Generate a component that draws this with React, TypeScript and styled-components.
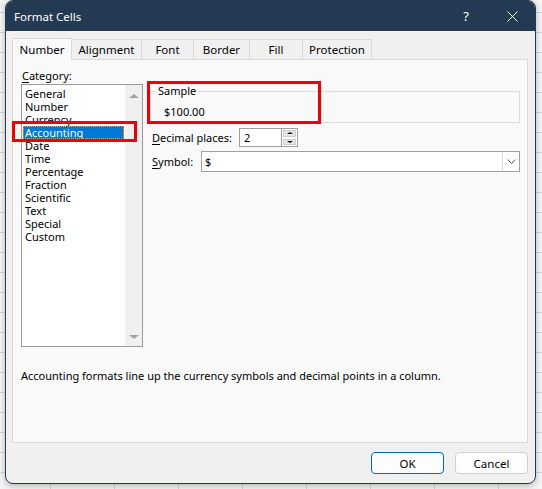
import React from 'react';
import styled, { createGlobalStyle } from 'styled-components';

const GlobalStyle = createGlobalStyle`
  html, body {
    margin: 0;
    padding: 0;
  }

  body {
    width: 542px;
    height: 489px;
    overflow: hidden;
    font-family: "Noto Sans", "Liberation Sans", sans-serif;
    font-size: 11px;
    color: #000;
    background-color: #f4f4f4;
    background-image:
      linear-gradient(#d4d4d4 1px, transparent 1px),
      linear-gradient(90deg, #d4d4d4 1px, transparent 1px);
    background-size: 64px 20px;
    background-position: 50px 12px;
  }
`;

const Dialog = styled.div`
  box-sizing: border-box;
  margin-left: 5px;
  width: 531px;
  height: 484px;
  border: 1px solid #233a52;
  border-radius: 8px;
  overflow: hidden;
  background: #f0f0f0;
  display: flex;
  flex-direction: column;
  box-shadow: 0 2px 6px rgba(0, 0, 0, 0.25);
`;

const TitleBar = styled.div`
  height: 30px;
  flex-shrink: 0;
  background: #233a52;
  color: #fff;
  display: flex;
  align-items: center;
  padding-left: 8px;
  font-size: 11.5px;
`;

const Title = styled.div`
  flex: 1;
`;

const TitleButton = styled.div`
  width: 46px;
  height: 30px;
  display: flex;
  align-items: center;
  justify-content: center;
  color: #fff;
  font-size: 13px;
`;

const Body = styled.div`
  flex: 1;
  display: flex;
  flex-direction: column;
  padding: 8px 7px 0 6px;
`;

const TabStrip = styled.div`
  display: flex;
  padding-left: 1px;
  height: 21px;
  position: relative;
  z-index: 1;
`;

const Tab = styled.div<{ $w: number; $active?: boolean }>`
  box-sizing: border-box;
  width: ${(p) => p.$w}px;
  height: ${(p) => (p.$active ? 22 : 21)}px;
  margin-top: ${(p) => (p.$active ? -1 : 0)}px;
  margin-left: -1px;
  display: flex;
  align-items: center;
  justify-content: center;
  border: 1px solid #d9d9d9;
  border-bottom: ${(p) => (p.$active ? 'none' : '1px solid #d9d9d9')};
  background: ${(p) => (p.$active ? '#f9f9f9' : '#f0f0f0')};
  font-size: 11.5px;
  padding-bottom: 1px;
`;

const Panel = styled.div`
  box-sizing: border-box;
  height: 384px;
  margin-top: -1px;
  border: 1px solid #d9d9d9;
  background: #f9f9f9;
  padding: 8px 7px 0 8px;
  display: flex;
  flex-direction: column;
`;

const Columns = styled.div`
  display: grid;
  grid-template-columns: 122px 1fr;
  column-gap: 7px;
`;

const LeftColumn = styled.div`
  display: flex;
  flex-direction: column;
`;

const FieldLabel = styled.div<{ $w?: number }>`
  line-height: 16px;
  padding-left: 1px;
  white-space: nowrap;
  width: ${(p) => (p.$w ? `${p.$w}px` : 'auto')};
  flex-shrink: 0;
`;

const Key = styled.span`
  text-decoration: underline;
  text-underline-offset: 2px;
`;

const ListWrap = styled.div`
  position: relative;
`;

const ListBox = styled.div`
  box-sizing: border-box;
  height: 263px;
  border: 1px solid #9a9a9a;
  background: #fff;
  display: flex;
`;

const ListItems = styled.div`
  flex: 1;
  padding: 2px 1px 0 1px;
`;

const ListItem = styled.div<{ $selected?: boolean }>`
  box-sizing: border-box;
  height: 13px;
  line-height: 13px;
  padding-left: 2px;
  white-space: nowrap;
  background: ${(p) => (p.$selected ? '#0078d7' : 'transparent')};
  color: ${(p) => (p.$selected ? '#fff' : '#000')};
  outline: ${(p) => (p.$selected ? '1px dotted #f3a43a' : 'none')};
  outline-offset: -1px;
`;

const ScrollBar = styled.div`
  width: 17px;
  background: #f0f0f0;
  display: flex;
  flex-direction: column;
  justify-content: space-between;
  align-items: center;
  padding: 9px 0 7px;
`;

const Arrow = styled.div<{ $down?: boolean; $color?: string; $size?: number }>`
  width: 0;
  height: 0;
  border-left: ${(p) => p.$size ?? 5}px solid transparent;
  border-right: ${(p) => p.$size ?? 5}px solid transparent;
  ${(p) =>
    p.$down
      ? `border-top: ${(p.$size ?? 5) - 1}px solid ${p.$color ?? '#a3a3a3'};`
      : `border-bottom: ${(p.$size ?? 5) - 1}px solid ${p.$color ?? '#a3a3a3'};`}
`;

const Highlight = styled.div<{ $left: number; $top: number; $w: number; $h: number }>`
  position: absolute;
  left: ${(p) => p.$left}px;
  top: ${(p) => p.$top}px;
  width: ${(p) => p.$w}px;
  height: ${(p) => p.$h}px;
  box-sizing: border-box;
  border: 3px solid #f00000;
  pointer-events: none;
`;

const RightColumn = styled.div`
  display: flex;
  flex-direction: column;
  padding-top: 15px;
`;

const SampleWrap = styled.div`
  position: relative;
`;

const GroupBox = styled.fieldset`
  margin: 0;
  height: 40px;
  box-sizing: border-box;
  border: 1px solid #dcdcdc;
  padding: 5px 0 0 5px;
  min-width: 0;

  legend {
    padding: 0 2px;
    line-height: 16px;
  }
`;

const SampleValue = styled.div`
  line-height: 16px;
  padding-left: 8px;
`;

const FormRow = styled.div<{ $top: number }>`
  display: flex;
  align-items: center;
  margin-top: ${(p) => p.$top}px;
  padding-left: 1px;
`;

const NumberInput = styled.div`
  box-sizing: border-box;
  width: 42px;
  height: 19px;
  border: 1px solid #a0a0a0;
  border-right: none;
  background: #fff;
  padding-left: 4px;
  line-height: 17px;
`;

const Spinner = styled.div`
  box-sizing: border-box;
  width: 17px;
  height: 19px;
  border: 1px solid #a0a0a0;
  display: flex;
  flex-direction: column;
  background: #fff;
`;

const SpinButton = styled.div`
  flex: 1;
  margin: 1px;
  background: #e6e6e6;
  border: 1px solid #cfcfcf;
  display: flex;
  align-items: center;
  justify-content: center;
`;

const Select = styled.div`
  box-sizing: border-box;
  flex: 1;
  height: 21px;
  border: 1px solid #a0a0a0;
  background: #fff;
  display: flex;
  align-items: center;
`;

const SelectValue = styled.div`
  flex: 1;
  padding-left: 3px;
`;

const DropButton = styled.div`
  box-sizing: border-box;
  width: 17px;
  height: 19px;
  border-left: 1px solid #dadada;
  display: flex;
  align-items: center;
  justify-content: center;
`;

const Description = styled.div`
  margin-top: 21px;
  line-height: 16px;
`;

const Footer = styled.div`
  display: flex;
  justify-content: flex-end;
  gap: 11px;
  margin-top: 9px;
`;

const Button = styled.div<{ $primary?: boolean }>`
  box-sizing: border-box;
  width: 73px;
  height: 22px;
  border-radius: 4px;
  border: 1px solid ${(p) => (p.$primary ? '#0067c0' : '#d0d0d0')};
  background: #fdfdfd;
  display: flex;
  align-items: center;
  justify-content: center;
  font-size: 11.5px;
`;

const tabs = [
  { name: 'Number', w: 60 },
  { name: 'Alignment', w: 71 },
  { name: 'Font', w: 53 },
  { name: 'Border', w: 57 },
  { name: 'Fill', w: 54 },
  { name: 'Protection', w: 70 },
];

const categories = [
  'General',
  'Number',
  'Currency',
  'Accounting',
  'Date',
  'Time',
  'Percentage',
  'Fraction',
  'Scientific',
  'Text',
  'Special',
  'Custom',
];

const App = () => {
  return (
    <>
      <GlobalStyle />
      <Dialog>
        <TitleBar>
          <Title>Format Cells</Title>
          <TitleButton>?</TitleButton>
          <TitleButton>
            <svg width="11" height="11" viewBox="0 0 11 11">
              <path d="M0.5 0.5 L10.5 10.5 M10.5 0.5 L0.5 10.5" stroke="#fff" strokeWidth="1" />
            </svg>
          </TitleButton>
        </TitleBar>

        <Body>
          <TabStrip>
            {tabs.map((t, i) => (
              <Tab key={t.name} $w={t.w} $active={i === 0}>
                {t.name}
              </Tab>
            ))}
          </TabStrip>

          <Panel>
            <Columns>
              <LeftColumn>
                <FieldLabel>
                  <Key>C</Key>ategory:
                </FieldLabel>
                <ListWrap>
                  <ListBox>
                    <ListItems>
                      {categories.map((c) => (
                        <ListItem key={c} $selected={c === 'Accounting'}>
                          {c}
                        </ListItem>
                      ))}
                    </ListItems>
                    <ScrollBar>
                      <Arrow />
                      <Arrow $down />
                    </ScrollBar>
                  </ListBox>
                  <Highlight $left={-9} $top={37} $w={125} $h={21} />
                </ListWrap>
              </LeftColumn>

              <RightColumn>
                <SampleWrap>
                  <GroupBox>
                    <legend>Sample</legend>
                    <SampleValue>$100.00</SampleValue>
                  </GroupBox>
                  <Highlight $left={-3} $top={-2} $w={174} $h={43} />
                </SampleWrap>

                <FormRow $top={5}>
                  <FieldLabel $w={87}>
                    <Key>D</Key>ecimal places:
                  </FieldLabel>
                  <NumberInput>2</NumberInput>
                  <Spinner>
                    <SpinButton>
                      <Arrow $size={3} $color="#000" />
                    </SpinButton>
                    <SpinButton>
                      <Arrow $size={3} $color="#000" $down />
                    </SpinButton>
                  </Spinner>
                </FormRow>

                <FormRow $top={4}>
                  <FieldLabel $w={49}>
                    <Key>S</Key>ymbol:
                  </FieldLabel>
                  <Select>
                    <SelectValue>$</SelectValue>
                    <DropButton>
                      <svg width="9" height="5" viewBox="0 0 9 5">
                        <path d="M0.5 0.5 L4.5 4.5 L8.5 0.5" fill="none" stroke="#555" strokeWidth="1" />
                      </svg>
                    </DropButton>
                  </Select>
                </FormRow>
              </RightColumn>
            </Columns>

            <Description>
              Accounting formats line up the currency symbols and decimal points in a column.
            </Description>
          </Panel>

          <Footer>
            <Button $primary>OK</Button>
            <Button>Cancel</Button>
          </Footer>
        </Body>
      </Dialog>
    </>
  );
};

export default App;
